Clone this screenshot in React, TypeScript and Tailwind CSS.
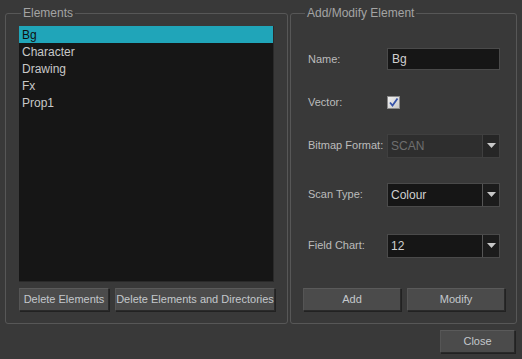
import React from "react"

const items = ["Bg", "Character", "Drawing", "Fx", "Prop1"]

function Btn({ label, className }: { label: string; className?: string }) {
  return (
    <button
      className={
        "h-[23px] bg-[#4b4b4b] border border-[#2a2a2a] border-t-[#5a5a5a] border-l-[#555] text-[#c4c8cc] text-[11px] leading-none whitespace-nowrap shadow-[1px_1px_0_#222] " +
        (className ?? "")
      }
    >
      {label}
    </button>
  )
}

function Arrow() {
  return (
    <svg width="9" height="5" viewBox="0 0 9 5">
      <polygon points="0,0 9,0 4.5,5" fill="#c8c8c8" />
    </svg>
  )
}

function Combo({ value, disabled }: { value: string; disabled?: boolean }) {
  return (
    <div
      className={
        "flex h-[24px] w-[113px] border " +
        (disabled ? "bg-[#2e2e2e] border-[#3f3f3f]" : "bg-[#161616] border-[#4a4a4a]")
      }
    >
      <div
        className={
          "flex-1 flex items-center pl-[3px] text-[12px] " +
          (disabled ? "text-[#6e6e6e]" : "text-[#d0d0d0]")
        }
      >
        {value}
      </div>
      <div
        className={
          "w-[17px] flex items-center justify-center border-l " +
          (disabled ? "bg-[#262626] border-[#3f3f3f]" : "bg-[#1c1c1c] border-[#555]")
        }
      >
        <Arrow />
      </div>
    </div>
  )
}

function Row({ label, children, className }: { label: string; children: React.ReactNode; className?: string }) {
  return (
    <div className={"flex items-center " + (className ?? "")}>
      <div className="w-[79px] text-[11px] text-[#bcbcbc] whitespace-nowrap">{label}</div>
      {children}
    </div>
  )
}

export default function App() {
  return (
    <div
      className="w-[522px] h-[359px] bg-[#393939] flex flex-col pl-[5px] pt-[6px] overflow-hidden"
      style={{ fontFamily: '"Liberation Sans", Arial, sans-serif' }}
    >
      <div className="flex gap-[2px]">
        {/* Elements */}
        <fieldset className="w-[282px] h-[318px] border border-[#575757] rounded-[3px] pl-[13px] pr-[12px] m-0 p-0 flex flex-col">
          <legend className="ml-[2px] px-[2px] text-[12px] leading-[14px] text-[#a4a4a4]">Elements</legend>
          <div className="mt-[6px] w-[255px] h-[256px] bg-[#161616] border-r border-b border-[#2a2a2a]">
            {items.map((it, i) => (
              <div
                key={it}
                className={
                  "h-[17px] flex items-center pl-[3px] text-[12px] " +
                  (i === 0 ? "bg-[#20a5b9] text-[#101010]" : "text-[#c8c8c8]")
                }
              >
                {it}
              </div>
            ))}
          </div>
          <div className="mt-[6px] flex gap-[6px]">
            <Btn label="Delete Elements" className="w-[90px]" />
            <Btn label="Delete Elements and Directories" className="w-[160px]" />
          </div>
        </fieldset>

        {/* Add/Modify Element */}
        <fieldset className="w-[227px] h-[318px] border border-[#575757] rounded-[3px] pl-[12px] m-0 p-0 flex flex-col">
          <legend className="ml-[2px] px-[2px] text-[12px] leading-[14px] text-[#a4a4a4]">Add/Modify Element</legend>
          <Row label="Name:" className="mt-[28px] pl-[5px]">
            <div className="h-[22px] w-[113px] bg-[#161616] border border-[#4a4a4a] flex items-center pl-[4px] text-[12px] text-[#d0d0d0]">
              Bg
            </div>
          </Row>
          <Row label="Vector:" className="mt-[24px] pl-[5px]">
            <div className="w-[13px] h-[13px] border border-[#8a8a8a] bg-gradient-to-br from-[#f2f2f2] to-[#c8c8c8] flex items-center justify-center">
              <svg width="11" height="11" viewBox="0 0 11 11">
                <path d="M2 5.5 L4.5 8.5 L9.5 1.5" stroke="#3552a8" strokeWidth="1.8" fill="none" />
              </svg>
            </div>
          </Row>
          <Row label="Bitmap Format:" className="mt-[23px] pl-[5px]">
            <Combo value="SCAN" disabled />
          </Row>
          <Row label="Scan Type:" className="mt-[25px] pl-[5px]">
            <Combo value="Colour" />
          </Row>
          <Row label="Field Chart:" className="mt-[27px] pl-[5px]">
            <Combo value="12" />
          </Row>
          <div className="mt-[30px] flex gap-[6px]">
            <Btn label="Add" className="w-[98px]" />
            <Btn label="Modify" className="w-[98px]" />
          </div>
        </fieldset>
      </div>
      <div className="flex justify-end pr-[7px] mt-[6px]">
        <Btn label="Close" className="w-[75px]" />
      </div>
    </div>
  )
}
